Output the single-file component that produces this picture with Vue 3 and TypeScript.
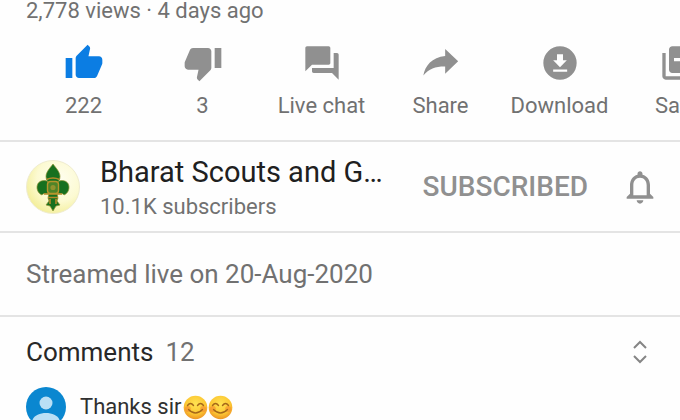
<script setup lang="ts">
interface Action {
  id: string
  label: string
  path: string
  active?: boolean
}

const actions: Action[] = [
  {
    id: 'like',
    label: '222',
    active: true,
    path: 'M1 21h4V9H1v12zm22-11c0-1.1-.9-2-2-2h-6.31l.95-4.57.03-.32c0-.41-.17-.79-.44-1.06L14.17 1 7.59 7.59C7.22 7.95 7 8.45 7 9v10c0 1.1.9 2 2 2h9c.83 0 1.54-.5 1.84-1.22l3.02-7.05c.09-.23.14-.47.14-.73v-2z',
  },
  {
    id: 'dislike',
    label: '3',
    path: 'M15 3H6c-.83 0-1.54.5-1.84 1.22l-3.02 7.05c-.09.23-.14.47-.14.73v2c0 1.1.9 2 2 2h6.31l-.95 4.57-.03.32c0 .41.17.79.44 1.06L9.83 23l6.59-6.59c.36-.36.58-.86.58-1.41V5c0-1.1-.9-2-2-2zm4 0v12h4V3h-4z',
  },
  {
    id: 'chat',
    label: 'Live chat',
    path: 'M21 6h-2v9H6v2c0 .55.45 1 1 1h11l4 4V7c0-.55-.45-1-1-1zm-4 6V3c0-.55-.45-1-1-1H3c-.55 0-1 .45-1 1v14l4-4h10c.55 0 1-.45 1-1z',
  },
  {
    id: 'share',
    label: 'Share',
    path: 'M14.5 3.6 22.3 11l-7.8 7.4v-4.3C9 14 4.8 15.4 1.4 19.5 2.4 13.6 6.6 8.7 14.5 7.8z',
  },
  {
    id: 'download',
    label: 'Download',
    path: 'M12 2a10 10 0 1 0 0 20 10 10 0 0 0 0-20zM10.2 6.8h3.6v3.6h2.3L12 14.5l-4.1-4.1h2.3zM7.9 15.9h8.4v1.3H7.9z',
  },
  {
    id: 'save',
    label: 'Save',
    path: 'M4 6H2v14c0 1.1.9 2 2 2h14v-2H4V6zm16-4H8c-1.1 0-2 .9-2 2v12c0 1.1.9 2 2 2h12c1.1 0 2-.9 2-2V4c0-1.1-.9-2-2-2zm-1 9h-4v4h-2v-4H9V9h4V5h2v4h4v2z',
  },
]

const smileys: number[] = [1, 2]
</script>

<template>
  <main class="page">
    <p class="stats">2,778 views · 4 days ago</p>

    <div class="actions">
      <button
        v-for="action in actions"
        :key="action.id"
        type="button"
        class="action"
        :class="{ active: action.active }"
      >
        <svg class="icon" viewBox="0 0 24 24" aria-hidden="true">
          <path :d="action.path" fill-rule="evenodd" />
        </svg>
        <span>{{ action.label }}</span>
      </button>
    </div>

    <section class="channel">
      <svg class="logo" viewBox="0 0 54 54" aria-hidden="true">
        <defs>
          <radialGradient id="disc" cx="62%" cy="35%" r="70%">
            <stop offset="0" stop-color="#fffef0" />
            <stop offset="0.6" stop-color="#fcfad2" />
            <stop offset="1" stop-color="#f3ee98" />
          </radialGradient>
        </defs>
        <circle cx="27" cy="27" r="26.5" fill="url(#disc)" stroke="#efecd0" />
        <g fill="#17701f" stroke="#8f9430" stroke-width="0.7">
          <path d="M27 4c-3 4-7 8-7 12.5 0 3 1.500 4.500 2.500 7h9c1-2.500 2.500-4 2.500-7C34 12 30 8 27 4z" />
          <path d="M22.500 22.500c-2-3-8.500-2.500-10.500 1-2.500 4.500 0 10 4 11.500 1-2 4-1.500 7-1.500zM31.500 22.500c2-3 8.500-2.500 10.500 1 2.500 4.500 0 10-4 11.500-1-2-4-1.500-7-1.500z" />
          <path d="M23 33h8l1 5-1 3 3 4-4 1-3 5-3-5-4-1 3-4-1-3z" />
        </g>
        <path d="M20.500 19.500Q27 16.500 33.500 19.500M18 34h18M22 37.500h10M24 39v5M30 39v5" fill="none" stroke="#b58a2a" stroke-width="1.600" />
        <rect x="21.500" y="21.500" width="11" height="12" rx="3" fill="#4f8428" stroke="#b7952c" stroke-width="1.400" />
        <circle cx="27" cy="27.500" r="2.600" fill="#91932e" />
      </svg>
      <div class="identity">
        <h1 class="name">Bharat Scouts and Guides</h1>
        <p class="subscribers">10.1K subscribers</p>
      </div>
      <button type="button" class="subscribed">SUBSCRIBED</button>
      <button type="button" class="bell" aria-label="Notifications">
        <svg class="icon" viewBox="0 0 24 24" aria-hidden="true">
          <path d="M12 22c1.100 0 2-.9 2-2h-4c0 1.100.9 2 2 2zm6-6v-5c0-3.070-1.630-5.640-4.500-6.320V4c0-.83-.67-1.500-1.500-1.500s-1.500.67-1.500 1.500v.68C7.640 5.360 6 7.920 6 11v5l-2 2v1h16v-1l-2-2zm-2 1H8v-6c0-2.480 1.510-4.500 4-4.500s4 2.020 4 4.500v6z" />
        </svg>
      </button>
    </section>

    <p class="streamed">Streamed live on 20-Aug-2020</p>

    <section class="comments">
      <header class="comments-head">
        <h2 class="comments-title">Comments</h2>
        <span class="count">12</span>
        <button type="button" class="expand" aria-label="Expand comments">
          <svg class="chevrons" viewBox="0 0 16 24" aria-hidden="true">
            <path d="M2 8l6-6 6 6M2 16l6 6 6-6" />
          </svg>
        </button>
      </header>
      <div class="comment">
        <svg class="avatar" viewBox="0 0 40 40" aria-hidden="true">
          <defs>
            <clipPath id="round"><circle cx="20" cy="20" r="20" /></clipPath>
          </defs>
          <g clip-path="url(#round)">
            <path fill="#0a87d0" d="M0 0h40v40H0z" />
            <circle cx="20" cy="16" r="6.500" fill="#b9dff5" />
            <path fill="#b9dff5" d="M6 36c0-7 7-10 14-10s14 3 14 10v4H6z" />
          </g>
        </svg>
        <p class="comment-text">
          <span>Thanks sir</span>
          <span class="smileys">
            <svg v-for="n in smileys" :key="n" class="smiley" viewBox="0 0 25 25" role="img" aria-label="😊">
              <defs>
                <radialGradient :id="`face-${n}`" cx="50%" cy="35%" r="65%">
                  <stop offset="0" stop-color="#ffe352" />
                  <stop offset="0.65" stop-color="#fcc733" />
                  <stop offset="1" stop-color="#ec9424" />
                </radialGradient>
              </defs>
              <circle cx="12.500" cy="12.500" r="11.800" :fill="`url(#face-${n})`" />
              <circle cx="4.800" cy="14" r="3" fill="#f58a30" opacity="0.6" />
              <circle cx="20.200" cy="14" r="3" fill="#f58a30" opacity="0.6" />
              <path d="M4.500 10.500q3-4 6 0M14.500 10.500q3-4 6 0M5.500 14.500q7 7 14 0" fill="none" stroke="#a5681a" stroke-width="1.400" stroke-linecap="round" />
            </svg>
          </span>
        </p>
      </div>
    </section>
  </main>
</template>

<style>
body {
  margin: 0;
  background: #fefefe;
}
</style>

<style scoped>
.page {
  height: 100vh;
  overflow: hidden;
  font-family: Roboto, "Liberation Sans", sans-serif;
  font-size: 22px;
  line-height: 28px;
  color: #717171;
}

p,
h1,
h2 {
  margin: 0;
  font-weight: 400;
}

button {
  padding: 0;
  border: 0;
  background: none;
  font: inherit;
  color: inherit;
  cursor: pointer;
}

.icon {
  display: block;
  width: 40px;
  height: 40px;
  fill: #909090;
}

.stats {
  padding: 0 26px;
  line-height: 22px;
}

.actions {
  display: flex;
  padding: 21px 0 20px 24px;
  overflow: hidden;
  border-bottom: 2px solid #e4e4e4;
}

.action {
  display: flex;
  flex: 0 0 119px;
  flex-direction: column;
  align-items: center;
  gap: 9px;
  white-space: nowrap;
}

.active .icon {
  fill: #0b7de3;
}

.channel {
  display: flex;
  align-items: center;
  padding: 10px 20px 9px 26px;
  border-bottom: 2px solid #e4e4e4;
}

.logo {
  flex: none;
  width: 54px;
  height: 54px;
}

.identity {
  flex: 1;
  min-width: 0;
  margin: 0 34px 0 20px;
}

.name {
  overflow: hidden;
  font-size: 29px;
  line-height: 40px;
  color: #202020;
  text-overflow: ellipsis;
  white-space: nowrap;
}

.subscribers {
  line-height: 30px;
}

.subscribed {
  font-size: 28px;
  font-weight: 500;
  color: #909090;
}

.bell {
  margin-left: 32px;
}

.streamed {
  padding: 27px 26px;
  font-size: 26px;
  border-bottom: 2px solid #e4e4e4;
}

.comments {
  padding: 19px 26px 0;
}

.comments-head {
  display: flex;
  align-items: center;
  gap: 12px;
  font-size: 26px;
  line-height: 32px;
}

.comments-title {
  font-size: inherit;
  color: #282828;
}

.expand {
  margin-left: auto;
  padding-right: 6px;
}

.chevrons {
  display: block;
  width: 16px;
  height: 24px;
  fill: none;
  stroke: #858585;
  stroke-width: 2;
}

.comment {
  display: flex;
  gap: 14px;
  align-items: center;
  margin-top: 19px;
}

.avatar {
  flex: none;
  width: 40px;
  height: 40px;
}

.comment-text {
  display: flex;
  gap: 2px;
  align-items: center;
  color: #303030;
}

.smileys {
  display: flex;
}

.smiley {
  width: 25px;
  height: 25px;
}
</style>
